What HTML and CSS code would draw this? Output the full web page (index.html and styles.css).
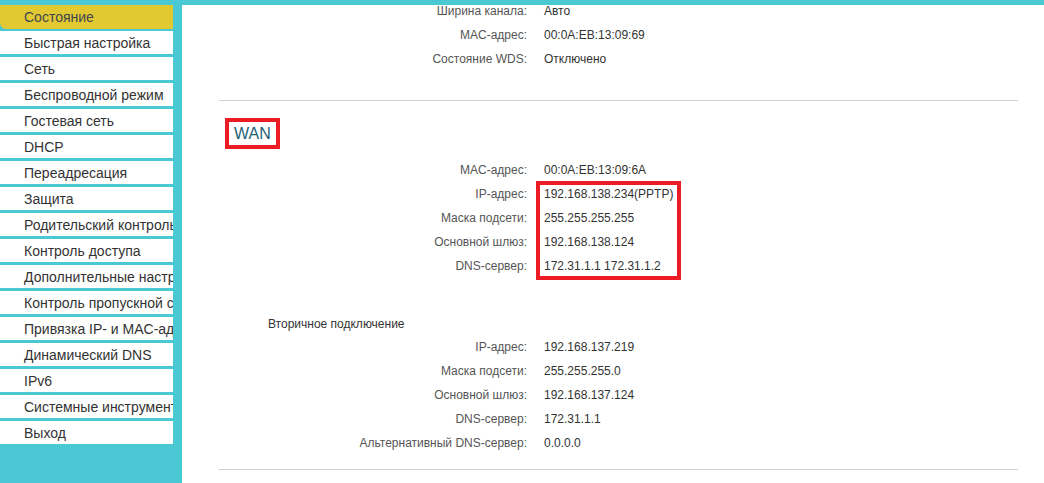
FILE: index.html
```html
<!DOCTYPE html>
<html>
<head>
    <title>Состояние</title>
    <link rel="stylesheet" href="styles.css">
</head>
<body>
    <div id="page">
        <div id="menu">
            <div class="item active">Состояние</div>
            <div class="item">Быстрая настройка</div>
            <div class="item">Сеть</div>
            <div class="item">Беспроводной режим</div>
            <div class="item">Гостевая сеть</div>
            <div class="item">DHCP</div>
            <div class="item">Переадресация</div>
            <div class="item">Защита</div>
            <div class="item">Родительский контроль</div>
            <div class="item">Контроль доступа</div>
            <div class="item">Дополнительные настройки маршрутизации</div>
            <div class="item">Контроль пропускной способности</div>
            <div class="item">Привязка IP- и MAC-адресов</div>
            <div class="item">Динамический DNS</div>
            <div class="item">IPv6</div>
            <div class="item">Системные инструменты</div>
            <div class="item">Выход</div>
        </div>
        <div id="content">
            <div class="rows first">
                <span class="label">Ширина канала:</span><span class="value">Авто</span>
                <span class="label">MAC-адрес:</span><span class="value">00:0A:EB:13:09:69</span>
                <span class="label">Состояние WDS:</span><span class="value">Отключено</span>
            </div>
            <hr class="sep">
            <div class="title">WAN</div>
            <div class="rows wan">
                <span class="label">MAC-адрес:</span><span class="value">00:0A:EB:13:09:6A</span>
                <span class="label">IP-адрес:</span><span class="value">192.168.138.234(PPTP)</span>
                <span class="label">Маска подсети:</span><span class="value">255.255.255.255</span>
                <span class="label">Основной шлюз:</span><span class="value">192.168.138.124</span>
                <span class="label">DNS-сервер:</span><span class="value">172.31.1.1 172.31.1.2</span>
                <div class="mark"></div>
            </div>
            <div class="subtitle">Вторичное подключение</div>
            <div class="rows">
                <span class="label">IP-адрес:</span><span class="value">192.168.137.219</span>
                <span class="label">Маска подсети:</span><span class="value">255.255.255.0</span>
                <span class="label">Основной шлюз:</span><span class="value">192.168.137.124</span>
                <span class="label">DNS-сервер:</span><span class="value">172.31.1.1</span>
                <span class="label">Альтернативный DNS-сервер:</span><span class="value">0.0.0.0</span>
            </div>
            <hr class="sep last">
        </div>
    </div>
</body>
</html>
```

FILE: styles.css
```css
html, body {
    height: 100%;
    margin: 0;
    padding: 0;
}
body {
    background-color: #4ac9d4;
    font-family: "Liberation Sans", Arial, sans-serif;
    overflow: hidden;
}
#page {
    display: flex;
    gap: 9px;
    padding-top: 5px;
    height: 100%;
    box-sizing: border-box;
}
#menu {
    width: 173px;
    flex: none;
}
.item {
    height: 23px;
    line-height: 25px;
    margin-bottom: 3px;
    padding-left: 24px;
    background-color: #fff;
    color: #333;
    font-size: 14px;
    white-space: nowrap;
    overflow: hidden;
}
.item.active {
    background-color: #e2c932;
    color: #3c4650;
    height: 24px;
    line-height: 24px;
    margin-bottom: 2px;
    border-bottom-left-radius: 6px;
}
#content {
    flex: 1;
    background-color: #fff;
    padding: 0 26px 0 37px;
    font-size: 12px;
    overflow: hidden;
}
.rows {
    display: grid;
    grid-template-columns: 308px auto;
    column-gap: 17px;
    grid-auto-rows: 24px;
    line-height: 24px;
}
.rows.first {
    margin-top: -6px;
}
.label {
    text-align: right;
    color: #555;
}
.value {
    color: #333;
}
.sep {
    border: none;
    border-top: 1px solid #d0d0d0;
    margin: 29px 0 0 0;
    height: 0;
}
.sep.last {
    margin-top: 14px;
}
.title {
    display: inline-block;
    margin: 17px 0 0 6px;
    padding: 0 5px;
    border: 4px solid #ec1c24;
    line-height: 23px;
    font-size: 16px;
    color: #1f5f76;
}
.wan {
    position: relative;
    margin-top: 9px;
}
.mark {
    position: absolute;
    left: 317px;
    top: 23px;
    width: 137px;
    height: 91px;
    border: 4px solid #ec1c24;
}
.subtitle {
    margin: 35px 0 0 49px;
    line-height: 22px;
    color: #333;
}
```
